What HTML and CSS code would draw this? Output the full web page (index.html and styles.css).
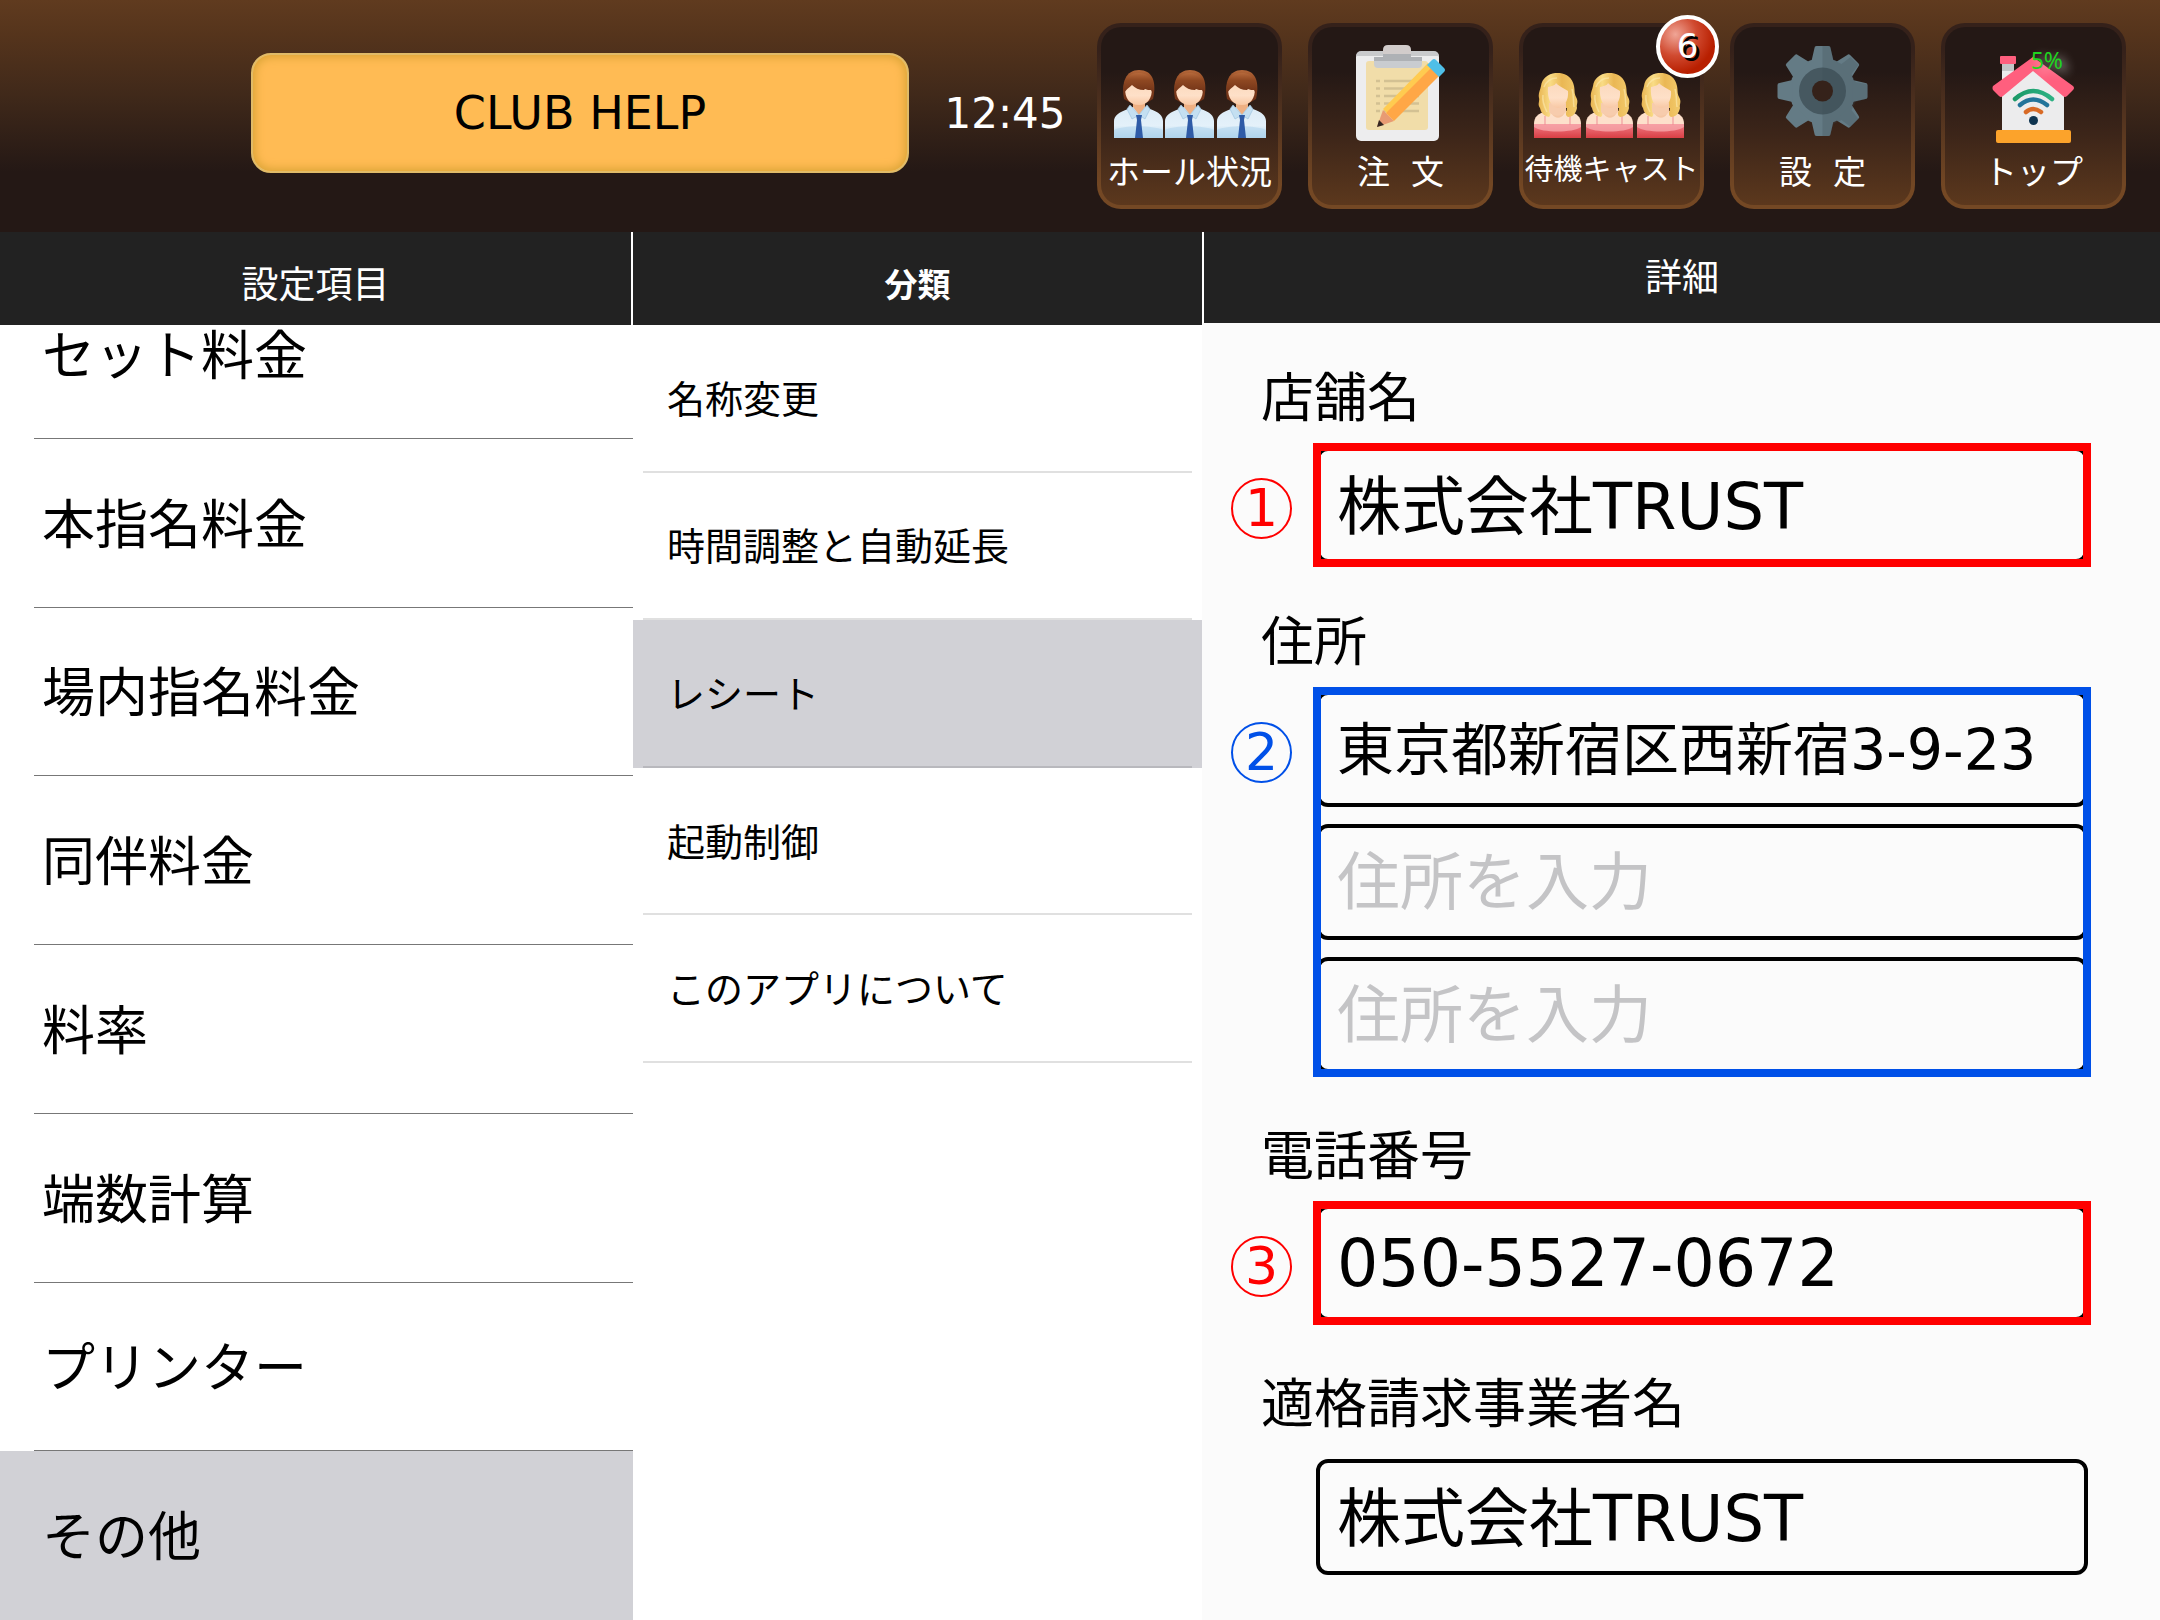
FILE: index.html
```html
<!DOCTYPE html>
<html lang="ja">
<head>
<meta charset="utf-8">
<meta name="viewport" content="width=device-width, initial-scale=1">
<title>CLUB HELP - 設定</title>
<link rel="stylesheet" href="styles.css">
</head>
<body>
<svg class="defs" aria-hidden="true">
  <defs>
    <linearGradient id="hairBrown" x1="0" y1="0" x2="0" y2="1"><stop offset="0" stop-color="#b5683a"/><stop offset=".35" stop-color="#8f4822"/><stop offset="1" stop-color="#6d3016"/></linearGradient>
    <linearGradient id="skin" x1="0" y1="0" x2="0" y2="1"><stop offset="0" stop-color="#fbd9bd"/><stop offset=".6" stop-color="#fee0c8"/><stop offset="1" stop-color="#f8c8a4"/></linearGradient>
    <linearGradient id="shirt" x1="0" y1="0" x2="0" y2="1"><stop offset="0" stop-color="#dcebf6"/><stop offset=".6" stop-color="#e4f1fa"/><stop offset="1" stop-color="#a9cfea"/></linearGradient>
    <linearGradient id="hairGold" x1="0" y1="0" x2="1" y2="0"><stop offset="0" stop-color="#e9b653"/><stop offset=".3" stop-color="#f9dc86"/><stop offset=".6" stop-color="#eab754"/><stop offset="1" stop-color="#f3cb6c"/></linearGradient>
    <linearGradient id="dress" x1="0" y1="0" x2="0" y2="1"><stop offset="0" stop-color="#f07a84"/><stop offset="1" stop-color="#d93f45"/></linearGradient>
    <symbol id="man" viewBox="0 0 49 68">
      <path d="M10 29C7 12 12 0 25 0S43 11 39 29L34 32H15Z" fill="url(#hairBrown)"/>
      <path d="M19 31h12v10l-6 8-6-8Z" fill="#eeb083"/>
      <path d="M0 68V51c0-5 5-9 14-12l5-2 6 8 6-8 5 2c9 3 13 7 13 12v17Z" fill="url(#shirt)"/>
      <path d="M0 60c10-5 38-5 49 0v8H0Z" fill="#b4d7ef" opacity=".6"/>
      <path d="M16 35l9 10-7 4-5-10ZM33 35l-8 10 6 4 5-10Z" fill="#c4dff1" stroke="#9fc4e0" stroke-width=".7"/>
      <path d="M22 45h6l-1 5 2 18h-8l2-18Z" fill="#2f5ba7"/>
      <path d="M11 18c0 10 4 17 14 17 9 0 13-7 13-17-5-7-22-10-27 0Z" fill="url(#skin)"/>
      <path d="M10 24C8 10 14 3 25 3s17 9 14 21l-2-4c-2 0-4 0-6-1l-1 1c-5 0-9-2-12-5-2 2-7 5-8 9Z" fill="url(#hairBrown)"/>
    </symbol>
    <symbol id="woman" viewBox="0 0 47 65">
      <path d="M0 65V51c0-7 4-11 13-13h21c9 2 13 6 13 13v14Z" fill="#fde0cb"/>
      <path d="M18 29h12v12c-3 5-9 5-12 0Z" fill="#f5c7a5"/>
      <path d="M0 51h47v14H0Z" fill="url(#dress)"/>
      <path d="M0 51h47v3c-8 6-39 6-47 0Z" fill="#f9b0b4" opacity=".7"/>
      <path d="M11 43v9M36 43v9" stroke="#ef8f95" stroke-width="1"/>
      <path d="M7 13C9-4 37-5 40 13c1 5 0 7 2 11 3 5 0 7 1 11-1 5-4 9-9 9-4-2-1-6-1-9l-18 0c0 4 3 6 0 9-5-1-8-4-9-9-3-4 0-7-1-10-1-5 1-7 2-12Z" fill="url(#hairGold)"/>
      <path d="M15 30h17v9c-4 5-13 5-17 0Z" fill="#f7ccad"/>
      <path d="M14 14c-1 11 3 21 10 21 6 0 11-8 10-17-4-3-10-5-12-8-1 3-5 3-8 4Z" fill="url(#skin)"/>
      <path d="M10 14c3-7 8-9 13-9M38 16c2 6 1 12 2 18M9 22c-1 6 1 11 4 17" stroke="#fdebb0" stroke-width="1.5" fill="none" opacity=".6"/>
    </symbol>
    <linearGradient id="wifiGreen" x1="0" x2="1"><stop offset="0" stop-color="#1c9a68"/><stop offset="1" stop-color="#2db183"/></linearGradient>
  </defs>
</svg>

<header class="topbar">
  <div class="brand">
    <button class="club" type="button">CLUB HELP</button>
    <time class="clock">12:45</time>
  </div>
  <nav class="menu">
    <button class="tile" type="button">
      <svg class="tile-icon" viewBox="4 27 177 117" aria-hidden="true">
        <use href="#man" x="17" y="70" width="49" height="68"/>
        <use href="#man" x="68" y="70" width="49" height="68"/>
        <use href="#man" x="120" y="70" width="49" height="68"/>
      </svg>
      <span class="tile-label">ホール状況</span>
    </button>
    <button class="tile" type="button">
      <svg class="tile-icon" viewBox="4 27 177 117" aria-hidden="true">
        <rect x="48" y="52" width="83" height="89" rx="5" fill="#ededee"/>
        <path d="M48 56a5 5 0 0 1 5-5h73a5 5 0 0 1 5 5Z" fill="#c9cacc"/>
        <rect x="58" y="61" width="62" height="69" rx="3" fill="#f1dda9"/>
        <path d="M75 57v-7q0-5 5-5h18q5 0 5 5v7Z" fill="#d2cccb"/>
        <path d="M66 57h48v7q0 4-4 4H70q-4 0-4-4Z" fill="#c9ccd0"/>
        <path d="M66 57h48v4H66ZM75 54h28v3H75Z" fill="#aeb1b5"/>
        <path d="M68 81h4M76 81h35M68 88.500h4M76 88.500h35M68 96h4M76 96h35M68 103.500h4M76 103.500h35M68 111h4M76 111h35" stroke="#d3c193" stroke-width="2.500"/>
        <path d="M69 127l6-17 11 11Z" fill="#e89b73"/>
        <path d="M69 127l2-7 5 5Z" fill="#352622"/>
        <path d="M75 109l45-46 8 8-46 45Z" fill="#ffcb50"/>
        <path d="M78 113l46-46 8 8-46 46Z" fill="#ffa746"/>
        <path d="M119 65l5-5q2-2 4 0l8 8q2 2 0 4l-5 5Z" fill="#4fbfe8"/>
      </svg>
      <span class="tile-label">注&nbsp;&nbsp;文</span>
    </button>
    <button class="tile" type="button">
      <svg class="tile-icon" viewBox="4 27 177 117" aria-hidden="true">
        <use href="#woman" x="15" y="73" width="47" height="65"/>
        <use href="#woman" x="67" y="73" width="47" height="65"/>
        <use href="#woman" x="118" y="73" width="47" height="65"/>
      </svg>
      <span class="tile-label tile-label--long">待機キャスト</span>
      <span class="badge">6</span>
    </button>
    <button class="tile" type="button">
      <svg class="tile-icon" viewBox="4 27 177 117" aria-hidden="true">
        <g transform="translate(92.500 91)">
          <g id="teeth" fill="#647b85">
            <circle r="33"/>
            <path id="tooth" d="M-11-30L-8-43q0-2 2-2H6q2 0 2 2l3 13Z"/>
            <use href="#tooth" transform="rotate(45)"/>
            <use href="#tooth" transform="rotate(90)"/>
            <use href="#tooth" transform="rotate(135)"/>
            <use href="#tooth" transform="rotate(180)"/>
            <use href="#tooth" transform="rotate(225)"/>
            <use href="#tooth" transform="rotate(270)"/>
            <use href="#tooth" transform="rotate(315)"/>
          </g>
          <circle r="23.500" fill="#465860"/>
          <path d="M0-45H6q2 0 2 2l3 12 8 4 9-7 8 8-7 9 4 8 10 2q2 0 2 2V6q0 2-2 2l-10 3-4 8 7 9-8 8-9-7-8 4-3 10q0 2-2 2H0Z" fill="#3a4a52" opacity=".25"/>
          <circle r="10.500" fill="#35221a"/>
        </g>
      </svg>
      <span class="tile-label">設&nbsp;&nbsp;定</span>
    </button>
    <button class="tile" type="button">
      <svg class="tile-icon" viewBox="4 27 177 117" aria-hidden="true">
        <path d="M61 61h12v22l-12 10Z" fill="#ebebec"/>
        <path d="M61 61h12v10H61Z" fill="#c4c6c8"/>
        <rect x="59" y="56" width="16" height="8" rx="1" fill="#ff5f7e"/>
        <path d="M61 90l31-24 31 24v41H61Z" fill="#ececed"/>
        <path d="M92 57l40 29q2 2 0 4l-6 6q-2 2-4 0L92 71 62 96q-2 2-4 0l-6-6q-1-2 0-4Z" fill="#ff5f7e"/>
        <rect x="55" y="130" width="75" height="13" rx="2" fill="#fca32b"/>
        <g fill="none" stroke-width="4.500" stroke-linecap="round">
          <path d="M74 99q18-16 37 0" stroke="url(#wifiGreen)"/>
          <path d="M79 105q13-11 27 0" stroke="#23749a"/>
          <path d="M85 112q7-6 15 0" stroke="#d86a25"/>
        </g>
        <circle cx="92.500" cy="120.500" r="4.500" fill="#0e3450"/>
      </svg>
      <span class="tile-label">トップ</span>
      <span class="percent">5%</span>
    </button>
  </nav>
</header>

<main class="columns">
  <section class="column">
    <h2 class="heading heading--ruled">設定項目</h2>
    <div class="scroller">
      <ul class="items">
        <li><a class="item" href="#set">セット料金</a></li>
        <li><a class="item" href="#main">本指名料金</a></li>
        <li><a class="item" href="#hall">場内指名料金</a></li>
        <li><a class="item" href="#escort">同伴料金</a></li>
        <li><a class="item" href="#rate">料率</a></li>
        <li><a class="item" href="#rounding">端数計算</a></li>
        <li><a class="item" href="#printer">プリンター</a></li>
        <li><a class="item item--current" href="#other">その他</a></li>
      </ul>
    </div>
  </section>

  <section class="column">
    <h2 class="heading heading--bold">分類</h2>
    <ul class="categories">
      <li><a class="category" href="#names">名称変更</a></li>
      <li><a class="category" href="#time">時間調整と自動延長</a></li>
      <li><a class="category category--current" href="#receipt">レシート</a></li>
      <li><a class="category" href="#startup">起動制御</a></li>
      <li><a class="category" href="#about">このアプリについて</a></li>
    </ul>
  </section>

  <section class="column column--detail">
    <h2 class="heading heading--detail">詳細</h2>
    <form class="form">
      <div class="field">
        <label class="label" for="shop">店舗名</label>
        <div class="row">
          <span class="marker red">1</span>
          <div class="inputs framed red"><input class="input input--name" id="shop" type="text" value="株式会社TRUST"></div>
        </div>
      </div>
      <div class="field field--wide">
        <label class="label" for="address1">住所</label>
        <div class="row">
          <span class="marker blue">2</span>
          <div class="inputs framed blue">
            <input class="input input--address" id="address1" type="text" value="東京都新宿区西新宿3-9-23">
            <input class="input" type="text" placeholder="住所を入力" aria-label="住所 2">
            <input class="input" type="text" placeholder="住所を入力" aria-label="住所 3">
          </div>
        </div>
      </div>
      <div class="field field--wide">
        <label class="label" for="phone">電話番号</label>
        <div class="row">
          <span class="marker red">3</span>
          <div class="inputs framed red"><input class="input input--phone" id="phone" type="tel" value="050-5527-0672"></div>
        </div>
      </div>
      <div class="field field--invoice">
        <label class="label" for="issuer">適格請求事業者名</label>
        <div class="row">
          <div class="inputs"><input class="input input--name" id="issuer" type="text" value="株式会社TRUST"></div>
        </div>
      </div>
      <div class="field">
        <label class="label" for="number">登録番号</label>
        <div class="row">
          <div class="inputs"><input class="input" id="number" type="text"></div>
        </div>
      </div>
    </form>
  </section>
</main>
</body>
</html>
```

FILE: styles.css
```css
* {
  box-sizing: border-box;
}

body {
  display: flex;
  flex-direction: column;
  height: 100vh;
  margin: 0;
  overflow: hidden;
  background: #fff;
  color: #000;
  font-family: "DejaVu Sans", "Noto Sans CJK JP", sans-serif;
}

button,
input {
  font-family: inherit;
}

ul {
  margin: 0;
  padding: 0;
  list-style: none;
}

a {
  color: inherit;
  text-decoration: none;
}

.defs {
  position: absolute;
  width: 0;
  height: 0;
}

/* Top bar */

.topbar {
  display: flex;
  align-items: center;
  flex: none;
  padding: 23px 34px 23px 251px;
  background: linear-gradient(#603b1f 0, #55341c 35px, #40291a 95px, #241815 172px);
}

.brand {
  display: flex;
  flex: 1;
  align-items: center;
  padding-bottom: 6px;
}

.club {
  flex: 1;
  height: 120px;
  border: 2px solid #e0bb68;
  border-radius: 20px;
  background: #ffbb54;
  box-shadow: inset 0 0 10px 2px #d9a335;
  color: #000;
  font-size: 46px;
}

.clock {
  width: 188px;
  padding-left: 4px;
  color: #fff;
  font-size: 42px;
  text-align: center;
}

.menu {
  display: flex;
  gap: 26px;
}

.tile {
  position: relative;
  display: flex;
  flex-direction: column;
  align-items: center;
  width: 185px;
  height: 186px;
  padding: 0;
  border: 4px solid transparent;
  border-radius: 24px;
  background:
    linear-gradient(#241815 25%, #3c2519 60%, #5c381d) padding-box,
    linear-gradient(#35211a 15%, #744824 90%) border-box;
  color: #fff;
}

.tile-icon {
  flex: none;
  width: 177px;
  height: 117px;
}

.tile-label {
  font-size: 33px;
  line-height: 58px;
  white-space: nowrap;
}

.tile-label--long {
  font-size: 29px;
  line-height: 52px;
}

.badge {
  position: absolute;
  top: -12px;
  right: -19px;
  width: 63px;
  height: 63px;
  border: 4px solid #fff;
  border-radius: 50%;
  background: radial-gradient(circle at 28% 28%, #f0a596 0, #d04a30 38%, #b81f00 70%);
  font-size: 34px;
  line-height: 55px;
  text-align: center;
  text-shadow: 3px 3px 0 #000;
}

.percent {
  position: absolute;
  top: 17px;
  right: 59px;
  color: #1fd41f;
  font-family: "Noto Sans", sans-serif;
  font-size: 23px;
  line-height: 32px;
  text-shadow: 6px 4px 10px rgba(255, 255, 255, .6);
}

/* Columns */

.columns {
  display: grid;
  flex: 1;
  grid-template-columns: 633fr 569fr 958fr;
  min-height: 0;
}

.column {
  display: flex;
  flex-direction: column;
  min-width: 0;
  min-height: 0;
  overflow: hidden;
}

.column--detail {
  background: #fbfbfb;
}

.heading {
  flex: none;
  height: 93px;
  margin: 0;
  padding-top: 10px;
  background: #222;
  color: #fff;
  font-size: 37px;
  font-weight: 400;
  line-height: 88px;
  text-align: center;
}

.heading--ruled {
  border-right: 2px solid #fff;
}

.heading--bold {
  font-size: 33px;
  font-weight: 700;
}

.heading--detail {
  height: 91px;
  padding-top: 3px;
  border-left: 2px solid #fff;
}

.scroller {
  display: flex;
  flex: 1;
  flex-direction: column;
  justify-content: flex-end;
  min-height: 0;
  overflow: hidden;
}

.items {
  display: grid;
  flex: none;
  grid-auto-rows: 1fr;
  height: 1350px;
}

.item {
  display: flex;
  align-items: center;
  height: 100%;
  padding: 0 0 5px 42px;
  background: linear-gradient(#777, #777) 34px 100% / 100% 1px no-repeat;
  font-size: 53px;
}

.item--current {
  background: #d1d1d6;
}

.categories {
  display: grid;
  grid-auto-rows: 1fr;
  height: 738px;
}

.category {
  display: flex;
  align-items: center;
  height: 100%;
  padding: 0 0 5px 34px;
  background: linear-gradient(#e0e0e0, #e0e0e0) 50% 100% / calc(100% - 20px) 2px no-repeat;
  font-size: 38px;
}

.category--current {
  background-color: #d1d1d6;
  background-image: linear-gradient(#b8b8bd, #b8b8bd);
}

/* Detail form */

.form {
  padding: 44px 72px 0 29px;
}

.field {
  margin-bottom: 48px;
}

.field--wide {
  margin-bottom: 52px;
}

.field--invoice {
  margin-bottom: 42px;
}

.label {
  display: block;
  margin-bottom: 16px;
  padding-left: 30px;
  font-size: 53px;
  line-height: 64px;
}

.field--invoice .label {
  margin-bottom: 22px;
}

.row {
  display: grid;
  grid-template-columns: 61px 1fr;
  column-gap: 24px;
}

.red {
  --tone: #f00;
}

.blue {
  --tone: #0050e8;
}

.marker {
  width: 61px;
  height: 61px;
  margin-top: 31px;
  border: 2px solid var(--tone);
  border-radius: 50%;
  color: var(--tone);
  font-size: 52px;
  line-height: 57px;
  text-align: center;
}

.inputs {
  position: relative;
  display: grid;
  grid-column: 2;
  row-gap: 17px;
}

.framed::after {
  position: absolute;
  inset: -4px -3px;
  border: 8px solid var(--tone);
  content: "";
  pointer-events: none;
}

.input {
  width: 100%;
  height: 116px;
  padding: 0 17px;
  border: 4px solid #000;
  border-radius: 12px;
  background: #fbfbfb;
  color: #000;
  font-size: 63px;
}

.input--name {
  padding-bottom: 8px;
  font-size: 64px;
}

.input--address {
  padding-bottom: 8px;
  font-size: 57px;
}

.input--phone {
  font-size: 65px;
}

.input::placeholder {
  color: #c4c4c6;
  opacity: 1;
}
```
